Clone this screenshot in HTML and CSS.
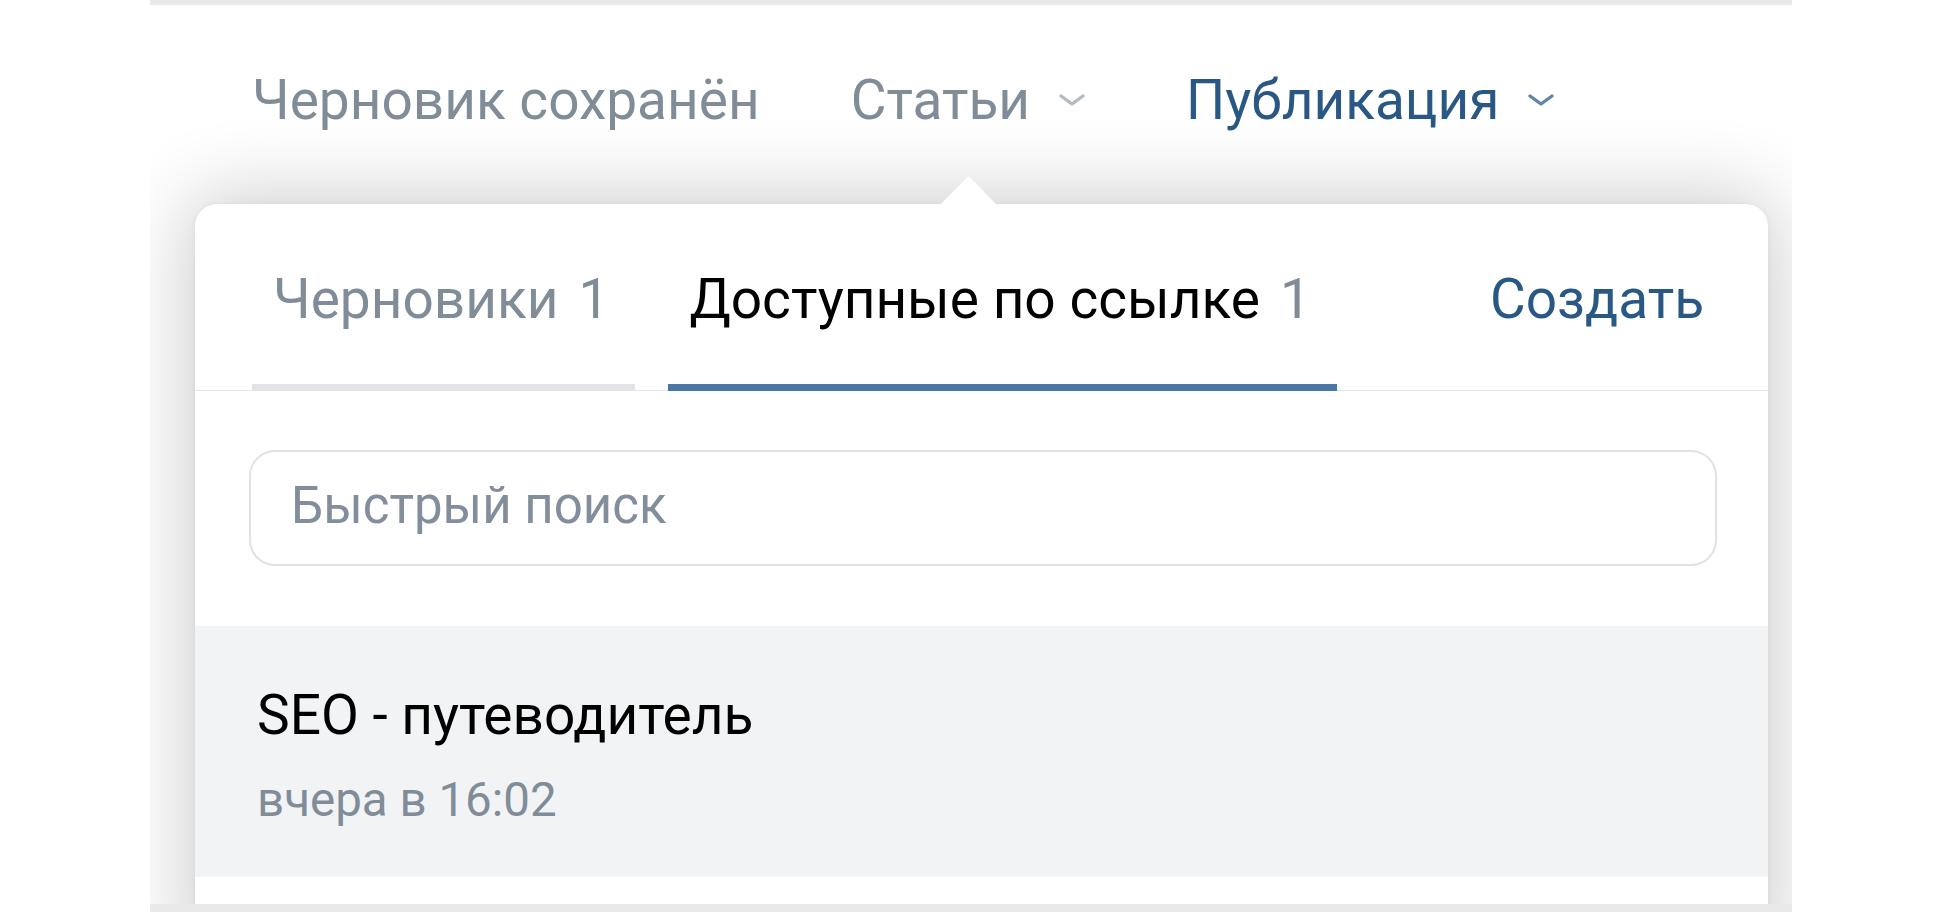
FILE: index.html
```html
<!DOCTYPE html>
<html lang="ru">
<head>
<meta charset="utf-8">
<title>Публикация</title>
<link rel="stylesheet" href="styles.css">
</head>
<body>
<div class="frame">
  <div class="screen">
    <div class="topbar">
      <span class="top-item top-status">Черновик сохранён</span>
      <span class="top-item top-menu">Статьи
        <svg class="chev" viewBox="0 0 28 16" width="28" height="16"><path d="M3 4 L14 12 L25 4" fill="none" stroke="currentColor" stroke-width="3.4" stroke-linecap="round" stroke-linejoin="round"/></svg>
      </span>
      <span class="top-item top-menu top-active">Публикация
        <svg class="chev" viewBox="0 0 28 16" width="28" height="16"><path d="M3 4 L14 12 L25 4" fill="none" stroke="currentColor" stroke-width="3.4" stroke-linecap="round" stroke-linejoin="round"/></svg>
      </span>
    </div>
    <div class="popup">
      <div class="tabs">
        <div class="tab tab-hover">Черновики<span class="count">1</span></div>
        <div class="tab tab-active">Доступные по ссылке<span class="count">1</span></div>
        <div class="create">Создать</div>
      </div>
      <div class="search">
        <span class="placeholder">Быстрый поиск</span>
      </div>
      <div class="item">
        <div class="item-title">SEO - путеводитель</div>
        <div class="item-date">вчера в 16:02</div>
      </div>
    </div>
  </div>
</div>
</body>
</html>
```
FILE: styles.css
```css
html, body {
  margin: 0;
  padding: 0;
  background: #ffffff;
}
body {
  font-family: Roboto, "Noto Sans", "Liberation Sans", sans-serif;
}
.frame {
  margin-left: 150px;
  width: 1642px;
  height: 912px;
  padding-top: 5px;
  box-sizing: border-box;
  background: #e9e9e9;
  overflow: hidden;
}
.screen {
  height: 899px;
  background: #ffffff;
  overflow: hidden;
}
.topbar {
  display: flex;
  align-items: center;
  padding: 63px 0 0 102px;
  height: 64px;
}
.top-item {
  display: flex;
  align-items: center;
  font-size: 55px;
  line-height: 64px;
  color: #818c99;
  white-space: nowrap;
}
.top-status {
  margin-right: 91px;
}
.top-menu .chev {
  margin-left: 28px;
  color: #b3bac4;
}
.top-active {
  margin-left: 100px;
  color: #2a5885;
}
.top-active .chev {
  color: #6184ab;
}
.popup {
  position: relative;
  margin: 72px 0 0 45px;
  width: 1573px;
  height: 760px;
  background: #ffffff;
  border-radius: 22px;
  box-shadow: 0 0 80px 8px rgba(0, 0, 0, 0.2), 0 0 6px rgba(0, 0, 0, 0.05);
}
.popup::before {
  content: "";
  position: absolute;
  left: 745px;
  top: -28px;
  width: 57px;
  height: 29px;
  background: #ffffff;
  clip-path: polygon(50% 0, 100% 100%, 0 100%);
}
.tabs {
  display: flex;
  align-items: stretch;
  height: 187px;
  padding-left: 57px;
  box-sizing: border-box;
  box-shadow: inset 0 -1px 0 #e3e5e9;
  border-radius: 22px 22px 0 0;
}
.tab {
  padding: 63px 26px 0 21px;
  font-size: 55px;
  line-height: 64px;
  color: #818c99;
  border-bottom: 7px solid transparent;
  white-space: nowrap;
}
.tab + .tab {
  margin-left: 33px;
}
.tab-hover {
  border-bottom-color: #e1e3e6;
}
.tab-active {
  color: #000000;
  border-bottom-color: #4a76a8;
}
.count {
  margin-left: 20px;
  color: #818c99;
}
.create {
  margin-left: auto;
  padding: 63px 64px 0 0;
  font-size: 55px;
  line-height: 64px;
  color: #2a5885;
  white-space: nowrap;
}
.search {
  margin: 59px 51px 0 54px;
  height: 116px;
  box-sizing: border-box;
  border: 2px solid #dfe2e7;
  border-radius: 26px;
  display: flex;
  align-items: center;
  padding: 0 0 4px 40px;
}
.placeholder {
  font-size: 51px;
  line-height: 60px;
  color: #828e9b;
}
.item {
  margin-top: 60px;
  height: 251px;
  box-sizing: border-box;
  background: #f2f3f5;
  padding: 57px 0 0 62px;
}
.item-title {
  font-size: 55px;
  line-height: 64px;
  color: #000000;
}
.item-date {
  margin-top: 25px;
  font-size: 47.5px;
  line-height: 56px;
  color: #818c99;
}
```
